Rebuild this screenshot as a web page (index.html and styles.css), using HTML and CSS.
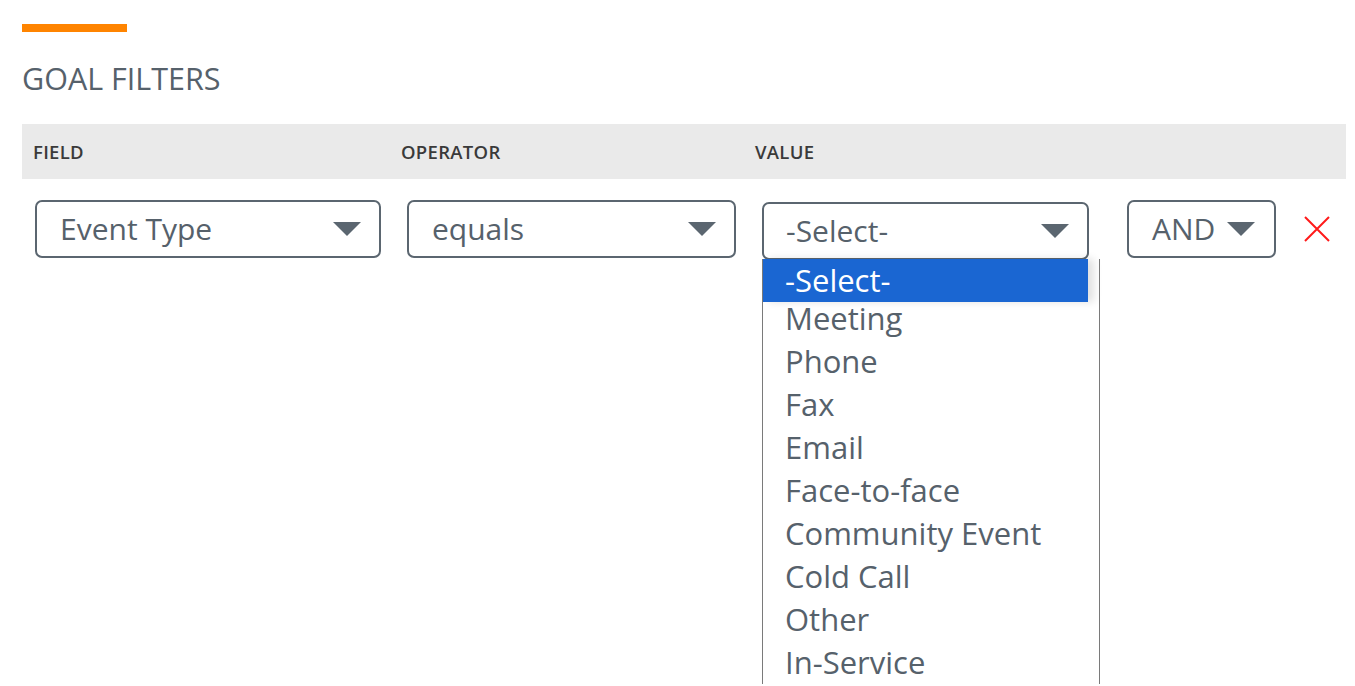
FILE: index.html
```html
<!DOCTYPE html>
<html>
<head>
<meta charset="utf-8">
<link rel="stylesheet" href="styles.css">
</head>
<body>
<div class="page">
  <div class="accent"></div>
  <h2 class="title">GOAL FILTERS</h2>
  <div class="head">
    <div class="hcol hcol-field">FIELD</div>
    <div class="hcol hcol-op">OPERATOR</div>
    <div class="hcol">VALUE</div>
  </div>
  <div class="row">
    <div class="select sel-field"><span>Event Type</span><i class="caret"></i></div>
    <div class="select sel-op"><span>equals</span><i class="caret"></i></div>
    <div class="value-wrap">
      <div class="select sel-value"><span>-Select-</span><i class="caret"></i></div>
      <ul class="list">
        <li class="active">-Select-</li>
        <li>Meeting</li>
        <li>Phone</li>
        <li>Fax</li>
        <li>Email</li>
        <li>Face-to-face</li>
        <li>Community Event</li>
        <li>Cold Call</li>
        <li>Other</li>
        <li>In-Service</li>
      </ul>
    </div>
    <div class="select sel-and"><span>AND</span><i class="caret"></i></div>
    <button class="remove" aria-label="Remove">
      <svg width="26" height="26" viewBox="0 0 26 26"><path d="M1 1 L25 25 M25 1 L1 25" stroke="#ff1a1a" stroke-width="2" fill="none"/></svg>
    </button>
  </div>
</div>
</body>
</html>
```

FILE: styles.css
```css
* { box-sizing: border-box; }
html, body { margin: 0; padding: 0; background: #fff; overflow: hidden; }
body { font-family: "Open Sans", "Liberation Sans", sans-serif; color: #56616b; }
.page { padding: 24px 9px 0 22px; height: 686px; }
.accent { width: 105px; height: 8px; background: #ff8400; }
.title {
  margin: 28px 0 0;
  font-size: 30.5px;
  font-weight: 400;
  line-height: 36px;
  color: #56616b;
}
.head {
  margin-top: 28px;
  height: 55px;
  background: #eaeaea;
  display: flex;
  align-items: center;
  padding-left: 11px;
  padding-top: 0;
}
.hcol { font-size: 18.5px; font-weight: 600; color: #3a3a3a; letter-spacing: 0.3px; }
.hcol-field { width: 368px; }
.hcol-op { width: 354px; }
.row {
  display: flex;
  align-items: flex-start;
  padding-left: 13px;
  margin-top: 21px;
}
.select {
  height: 58px;
  border: 2px solid #5b6670;
  border-radius: 7px;
  display: flex;
  align-items: center;
  justify-content: space-between;
  padding: 0 18px 0 24px;
  font-size: 30px;
  color: #56616b;
  background: #fff;
}
.select span { line-height: 1; padding-bottom: 0; }
.caret {
  width: 0; height: 0;
  border-left: 14px solid transparent;
  border-right: 14px solid transparent;
  border-top: 14px solid #5b6670;
}
.sel-field { width: 346px; padding-left: 23px; }
.sel-op { width: 329px; margin-left: 26px; padding-left: 23px; }
.value-wrap { position: relative; margin-left: 26px; margin-top: 2px; }
.sel-value { width: 327px; padding-left: 22px; }
.sel-and { width: 149px; margin-left: 38px; padding-left: 23px; padding-right: 19px; }
.remove {
  margin-left: 28px;
  margin-top: 16px;
  width: 26px; height: 26px;
  padding: 0; border: 0; background: none;
  display: flex;
}
.list {
  position: absolute;
  left: 0;
  top: 57px;
  width: 338px;
  margin: 0;
  padding: 0;
  list-style: none;
  background: #fff;
  border-left: 1px solid #7a7a7a;
  border-right: 1px solid #7a7a7a;
  z-index: 5;
}
.list li {
  height: 43px;
  line-height: 43px;
  font-size: 31px;
  padding-left: 22px;
  color: #56616b;
  white-space: nowrap;
}
.list li.active {
  position: relative;
  z-index: 1;
  background: #1a66d2;
  color: #fff;
  margin-right: 11px;
  margin-bottom: -5px;
  box-shadow: 6px 0 8px rgba(0,0,0,0.12);
}
```
